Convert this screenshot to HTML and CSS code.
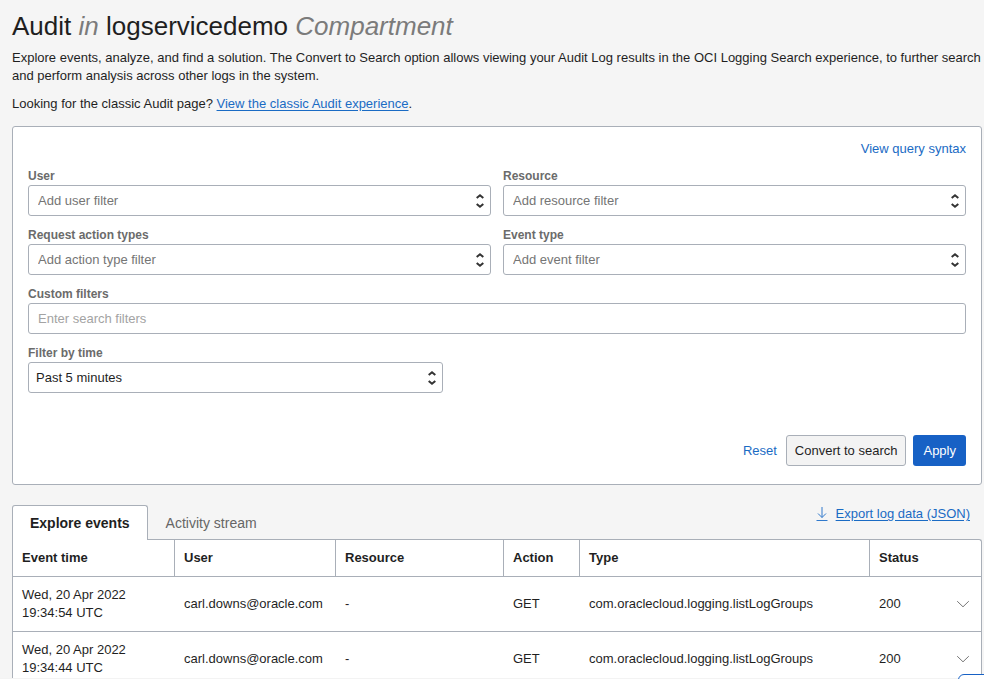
FILE: index.html
```html
<!DOCTYPE html>
<html lang="en">
<head>
<meta charset="utf-8">
<meta name="viewport" content="width=device-width, initial-scale=1">
<title>Audit</title>
<link rel="stylesheet" href="styles.css">
</head>
<body>
<svg class="sprite" aria-hidden="true">
  <symbol id="updown" viewBox="0 0 10 16"><path d="M1.700 5 5 2.200l3.300 2.800M1.700 11 5 13.800l3.300-2.800"/></symbol>
  <symbol id="chevron" viewBox="0 0 14 8"><path d="M1.2 1.2 7 6.800l5.800-5.600"/></symbol>
</svg>
<main class="page">
  <h1>Audit <em>in</em> logservicedemo <em>Compartment</em></h1>
  <p>Explore events, analyze, and find a solution. The Convert to Search option allows viewing your Audit Log results in the OCI Logging Search experience, to further search and perform analysis across other logs in the system.</p>
  <p>Looking for the classic Audit page? <a class="underlined" href="#">View the classic Audit experience</a>.</p>

  <form class="panel">
    <a class="syntax" href="#">View query syntax</a>
    <div class="fields">
      <div class="field">
        <label for="user">User</label>
        <div class="picker"><select id="user"><option>Add user filter</option></select><svg class="arrows"><use href="#updown"/></svg></div>
      </div>
      <div class="field">
        <label for="resource">Resource</label>
        <div class="picker"><select id="resource"><option>Add resource filter</option></select><svg class="arrows"><use href="#updown"/></svg></div>
      </div>
      <div class="field">
        <label for="action">Request action types</label>
        <div class="picker"><select id="action"><option>Add action type filter</option></select><svg class="arrows"><use href="#updown"/></svg></div>
      </div>
      <div class="field">
        <label for="type">Event type</label>
        <div class="picker"><select id="type"><option>Add event filter</option></select><svg class="arrows"><use href="#updown"/></svg></div>
      </div>
      <div class="field wide">
        <label for="custom">Custom filters</label>
        <input id="custom" type="text" placeholder="Enter search filters">
      </div>
      <div class="field wide">
        <label for="time">Filter by time</label>
        <div class="picker time"><select id="time"><option>Past 5 minutes</option></select><svg class="arrows"><use href="#updown"/></svg></div>
      </div>
    </div>
    <div class="actions">
      <button type="reset" class="link">Reset</button>
      <button type="button" class="secondary">Convert to search</button>
      <button type="submit" class="primary">Apply</button>
    </div>
  </form>

  <section>
    <div class="tabbar">
      <div class="tabs" role="tablist">
        <button class="tab active" role="tab" aria-selected="true">Explore events</button>
        <button class="tab" role="tab" aria-selected="false">Activity stream</button>
      </div>
      <a class="export" href="#">
        <svg viewBox="0 0 12 14" aria-hidden="true"><path d="M6 0v10.500M2 6.500l4 4 4-4M.5 13.500h11"/></svg>
        <span class="underlined">Export log data (JSON)</span>
      </a>
    </div>
    <table>
      <colgroup><col class="c-time"><col class="c-user"><col class="c-resource"><col class="c-action"><col><col class="c-status"><col class="c-toggle"></colgroup>
      <thead>
        <tr><th>Event time</th><th>User</th><th>Resource</th><th>Action</th><th>Type</th><th colspan="2">Status</th></tr>
      </thead>
      <tbody>
        <tr>
          <td>Wed, 20 Apr 2022 19:34:54 UTC</td><td>carl.downs@oracle.com</td><td>-</td><td>GET</td><td>com.oraclecloud.logging.listLogGroups</td><td>200</td>
          <td class="toggle"><button aria-label="Expand row"><svg><use href="#chevron"/></svg></button></td>
        </tr>
        <tr>
          <td>Wed, 20 Apr 2022 19:34:44 UTC</td><td>carl.downs@oracle.com</td><td>-</td><td>GET</td><td>com.oraclecloud.logging.listLogGroups</td><td>200</td>
          <td class="toggle"><button aria-label="Expand row"><svg><use href="#chevron"/></svg></button></td>
        </tr>
      </tbody>
    </table>
  </section>
</main>
<footer class="footer"></footer>
<button class="help" aria-label="Help"></button>
</body>
</html>
```
FILE: styles.css
```css
* { box-sizing: border-box; }

body {
  margin: 0;
  height: 100vh;
  overflow: hidden;
  background: #f5f5f5;
  color: #1f1f1f;
  font: 13px/18px "Liberation Sans", Arial, sans-serif;
}

button, input, select { font: inherit; color: inherit; }
button { cursor: pointer; }
a { color: #1a6bc4; text-decoration: none; }
.underlined { text-decoration: underline; text-underline-offset: 2px; }
.sprite { display: none; }

.page { padding: 10px 2px 0 12px; }

h1 {
  margin: 0 0 7px;
  font-size: 26px;
  line-height: 32px;
  font-weight: 400;
}
h1 em { color: #7b7b7b; }
p { margin: 0 0 10px; }

.panel {
  display: flex;
  flex-direction: column;
  margin-top: 13px;
  padding: 13px 15px 18px;
  background: #fff;
  border: 1px solid #a9afb8;
  border-radius: 3px;
}
.syntax { align-self: flex-end; margin-bottom: 9px; }

.fields {
  display: grid;
  grid-template-columns: 1fr 1fr;
  gap: 10px 12px;
}
.field { display: flex; flex-direction: column; }
.wide { grid-column: 1 / -1; }
label {
  color: #6b6b6b;
  font-size: 12px;
  font-weight: 700;
}
select, input {
  width: 100%;
  height: 31px;
  padding: 0 9px;
  background: #fff;
  border: 1px solid #a9afb8;
  border-radius: 3px;
  appearance: none;
}
select { color: #757575; }
input::placeholder { color: #a3a3a3; }
.picker { position: relative; display: flex; }
.time { width: 415px; }
.time select { padding: 0 7px; color: #1f1f1f; }
.arrows {
  position: absolute;
  top: 8px;
  right: 6px;
  width: 10px;
  height: 16px;
  fill: none;
  stroke: #333;
  stroke-width: 2;
  pointer-events: none;
}

.actions {
  display: flex;
  justify-content: flex-end;
  margin-top: 42px;
}
.actions button {
  height: 31px;
  padding: 0 8px;
  border: 1px solid transparent;
  border-radius: 3px;
}
.actions .link { background: none; color: #1a6bc4; }
.actions .secondary { background: #f3f3f3; border-color: #a9afb8; }
.actions .primary { margin-left: 7px; padding: 0 9px; background: #1761c5; color: #fff; }

.tabbar {
  display: flex;
  justify-content: space-between;
  align-items: flex-start;
  margin-top: 20px;
}
.tabs { display: flex; }
.tab {
  height: 35px;
  padding: 0 17px;
  background: none;
  border: 1px solid transparent;
  border-bottom: 0;
  border-radius: 3px 3px 0 0;
  color: #666;
  font-size: 14px;
}
.active {
  position: relative;
  height: 35px;
  margin-bottom: -1px;
  background: #fff;
  border-color: #a9afb8;
  color: #1f1f1f;
  font-weight: 700;
}
.tabs { height: 34px; }
.export {
  display: flex;
  align-items: center;
  gap: 8px;
  padding-right: 12px;
}
.export svg {
  width: 12px;
  height: 14px;
  fill: none;
  stroke: #3079cc;
}

table {
  width: 100%;
  table-layout: fixed;
  border-collapse: separate;
  border-spacing: 0;
  background: #fff;
  border: 1px solid #a9afb8;
  border-bottom: 0;
  border-radius: 0 3px 0 0;
}
.c-time { width: 162px; }
.c-user { width: 161px; }
.c-resource { width: 168px; }
.c-action { width: 76px; }
.c-status { width: 75px; }
.c-toggle { width: 36px; }
th, td {
  padding: 9px;
  text-align: left;
  border-bottom: 1px solid #a9afb8;
}
th:not(:last-child) { border-right: 1px solid #a9afb8; }
td:first-child { padding-right: 40px; }
.toggle { padding: 0; text-align: center; }
.toggle button {
  display: inline-flex;
  padding: 4px;
  background: none;
  border: 0;
}
.toggle svg {
  width: 14px;
  height: 8px;
  fill: none;
  stroke: #777;
}

.footer {
  position: fixed;
  inset: auto 0 0;
  height: 1px;
  background: #f3f3f3;
}
.help {
  position: fixed;
  right: -30px;
  bottom: -35px;
  width: 56px;
  height: 40px;
  background: #fff;
  border: 1px solid #1761c5;
  border-radius: 6px;
}
```
